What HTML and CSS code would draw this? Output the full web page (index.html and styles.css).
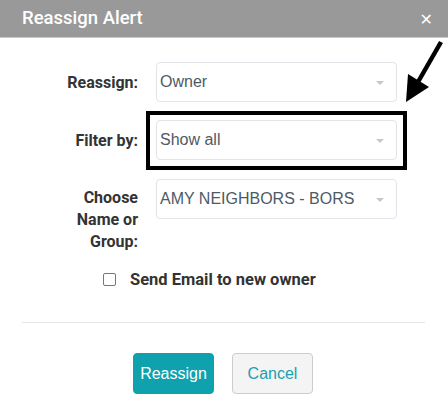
FILE: index.html
```html
<!DOCTYPE html>
<html>
<head>
<meta charset="utf-8">
<link rel="stylesheet" href="styles.css">
</head>
<body>
<div class="dialog">
  <div class="header">
    <span class="title">Reassign Alert</span>
    <span class="close">&#x2715;</span>
  </div>
  <div class="form">
    <label class="lbl">Reassign:</label>
    <div class="field"><div class="select"><span>Owner</span><i class="caret"></i></div></div>
    <label class="lbl">Filter by:</label>
    <div class="field boxed"><div class="select"><span>Show all</span><i class="caret"></i></div></div>
    <label class="lbl multi">Choose<br>Name or<br>Group:</label>
    <div class="field"><div class="select"><span>AMY NEIGHBORS - BORS</span><i class="caret"></i></div></div>
  </div>
  <div class="check">
    <span class="box"></span>
    <span class="check-text">Send Email to new owner</span>
  </div>
  <div class="divider"></div>
  <div class="buttons">
    <button class="btn primary">Reassign</button>
    <button class="btn secondary">Cancel</button>
  </div>
  <svg class="arrow" width="48" height="72" viewBox="0 0 48 72">
    <line x1="43" y1="6" x2="20" y2="46" stroke="#000" stroke-width="4.5"/>
    <polygon points="8,66 10,38 31,51" fill="#000"/>
  </svg>
</div>
</body>
</html>
```

FILE: styles.css
```css
html, body {
  margin: 0;
  padding: 0;
  background: #fff;
}
.dialog {
  position: relative;
  width: 448px;
  height: 420px;
  font-family: Roboto, "Liberation Sans", sans-serif;
}
.header {
  background: #999999;
  border-bottom: 1px solid #c8c8c8;
  display: flex;
  align-items: center;
  justify-content: space-between;
  padding: 0 15px 0 22px;
  box-sizing: border-box;
  height: 38px;
}
.title {
  color: #fff;
  font-size: 18.5px;
  font-weight: 500;
  margin-top: -2px;
}
.close {
  color: #fff;
  font-size: 16px;
  font-family: "DejaVu Sans", sans-serif;
  margin-top: 1px;
}
.form {
  display: grid;
  grid-template-columns: 138px 261px;
  column-gap: 8px;
  row-gap: 9px;
  margin-top: 24px;
}
.lbl {
  text-align: right;
  font-weight: 700;
  font-size: 16px;
  color: #333;
  align-self: center;
}
.lbl.multi {
  align-self: start;
  line-height: 22px;
  padding-top: 8px;
}
.field {
  padding: 0 10px;
}
.field.boxed {
  border: 4px solid #000;
  padding: 5px 6px 6px;
}
.select {
  height: 40px;
  box-sizing: border-box;
  border: 1px solid #e1e4e8;
  border-radius: 4px;
  display: flex;
  align-items: center;
  justify-content: space-between;
  padding: 0 12px 0 3px;
  font-family: "Liberation Sans", Arial, sans-serif;
  font-size: 16px;
  color: #4e5a66;
}
.caret {
  width: 0;
  height: 0;
  border-left: 4.5px solid transparent;
  border-right: 4.5px solid transparent;
  border-top: 4.5px solid #c8c8c8;
  margin-top: 2px;
}
.check {
  display: flex;
  align-items: center;
  margin-top: 17px;
  padding-left: 103px;
}
.box {
  width: 11px;
  height: 11px;
  border: 1px solid #767676;
  border-radius: 2px;
  margin-right: 14px;
}
.check-text {
  font-weight: 700;
  font-size: 16.5px;
  color: #333;
}
.divider {
  margin: 33px 23px 0 22px;
  height: 1px;
  background: #e6e6e6;
}
.buttons {
  display: flex;
  gap: 18px;
  padding-left: 133px;
  margin-top: 30px;
}
.btn {
  width: 81px;
  height: 41px;
  border-radius: 4px;
  font-family: "Liberation Sans", Arial, sans-serif;
  font-size: 16px;
  padding: 0;
}
.primary {
  background: #0fa1ad;
  border: 1px solid #0fa1ad;
  color: #fff;
}
.secondary {
  background: #f4f4f4;
  border: 1px solid #cccccc;
  color: #1a9fb0;
}
.arrow {
  position: absolute;
  left: 398px;
  top: 36px;
}
```
